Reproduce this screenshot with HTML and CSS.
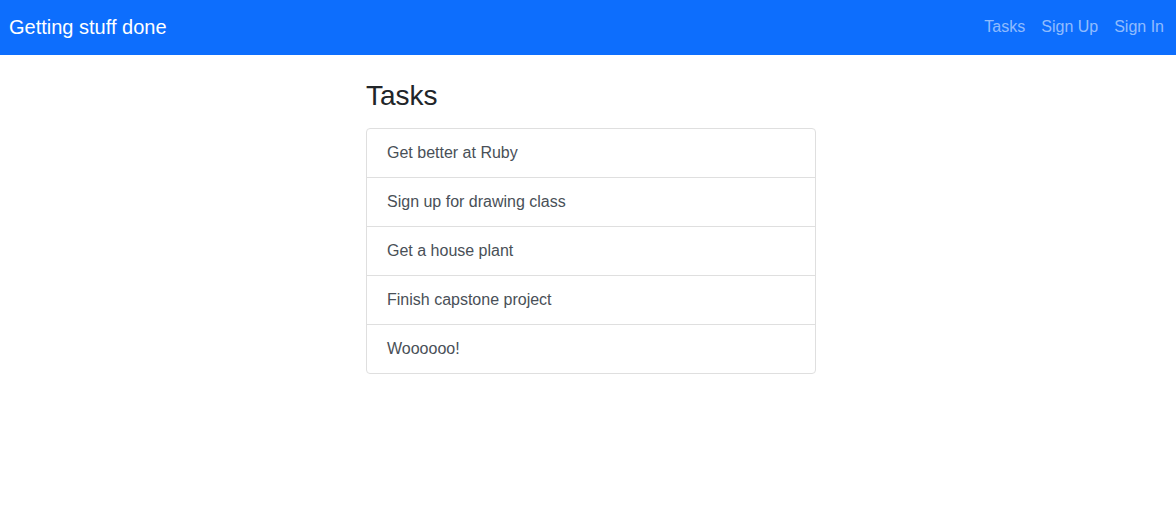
FILE: index.html
```html
<!DOCTYPE html>
<html>
<head>
<meta charset="utf-8">
<title>Getting stuff done</title>
<link rel="stylesheet" href="styles.css">
</head>
<body>
<nav class="navbar">
  <a class="brand" href="#">Getting stuff done</a>
  <ul class="nav-links">
    <li><a href="#">Tasks</a></li>
    <li><a href="#">Sign Up</a></li>
    <li><a href="#">Sign In</a></li>
  </ul>
</nav>
<main class="main">
  <section class="column">
    <h3 class="title">Tasks</h3>
    <ul class="list-group">
      <li class="list-item">Get better at Ruby</li>
      <li class="list-item">Sign up for drawing class</li>
      <li class="list-item">Get a house plant</li>
      <li class="list-item">Finish capstone project</li>
      <li class="list-item">Woooooo!</li>
    </ul>
  </section>
</main>
</body>
</html>
```
FILE: styles.css
```css
* { box-sizing: border-box; }
html, body {
  margin: 0;
  padding: 0;
  background: #fff;
  font-family: "Liberation Sans", Arial, Helvetica, sans-serif;
  color: #212529;
}
.navbar {
  height: 55px;
  background: #0d6efd;
  display: flex;
  align-items: center;
  justify-content: space-between;
  padding: 0 4px 2px 9px;
}
.brand {
  color: #fff;
  font-size: 20px;
  text-decoration: none;
  line-height: 30px;
}
.nav-links {
  list-style: none;
  display: flex;
  margin: 0;
  padding: 0;
}
.nav-links a {
  display: block;
  padding: 0 8px;
  color: rgba(255, 255, 255, 0.55);
  text-decoration: none;
  font-size: 16px;
  line-height: 24px;
}
.main {
  display: flex;
  justify-content: center;
  padding: 24px 0 0 6px;
}
.column {
  width: 450px;
}
.title {
  margin: 0 0 15px;
  font-size: 28px;
  font-weight: 500;
  line-height: 34px;
  color: #212529;
}
.list-group {
  list-style: none;
  margin: 0;
  padding: 0;
  border: 1px solid #dfdfdf;
  border-radius: 4px;
}
.list-item {
  padding: 12px 20px;
  font-size: 16px;
  line-height: 24px;
  color: #495057;
  border-top: 1px solid #dfdfdf;
}
.list-item:first-child {
  border-top: none;
}
```
